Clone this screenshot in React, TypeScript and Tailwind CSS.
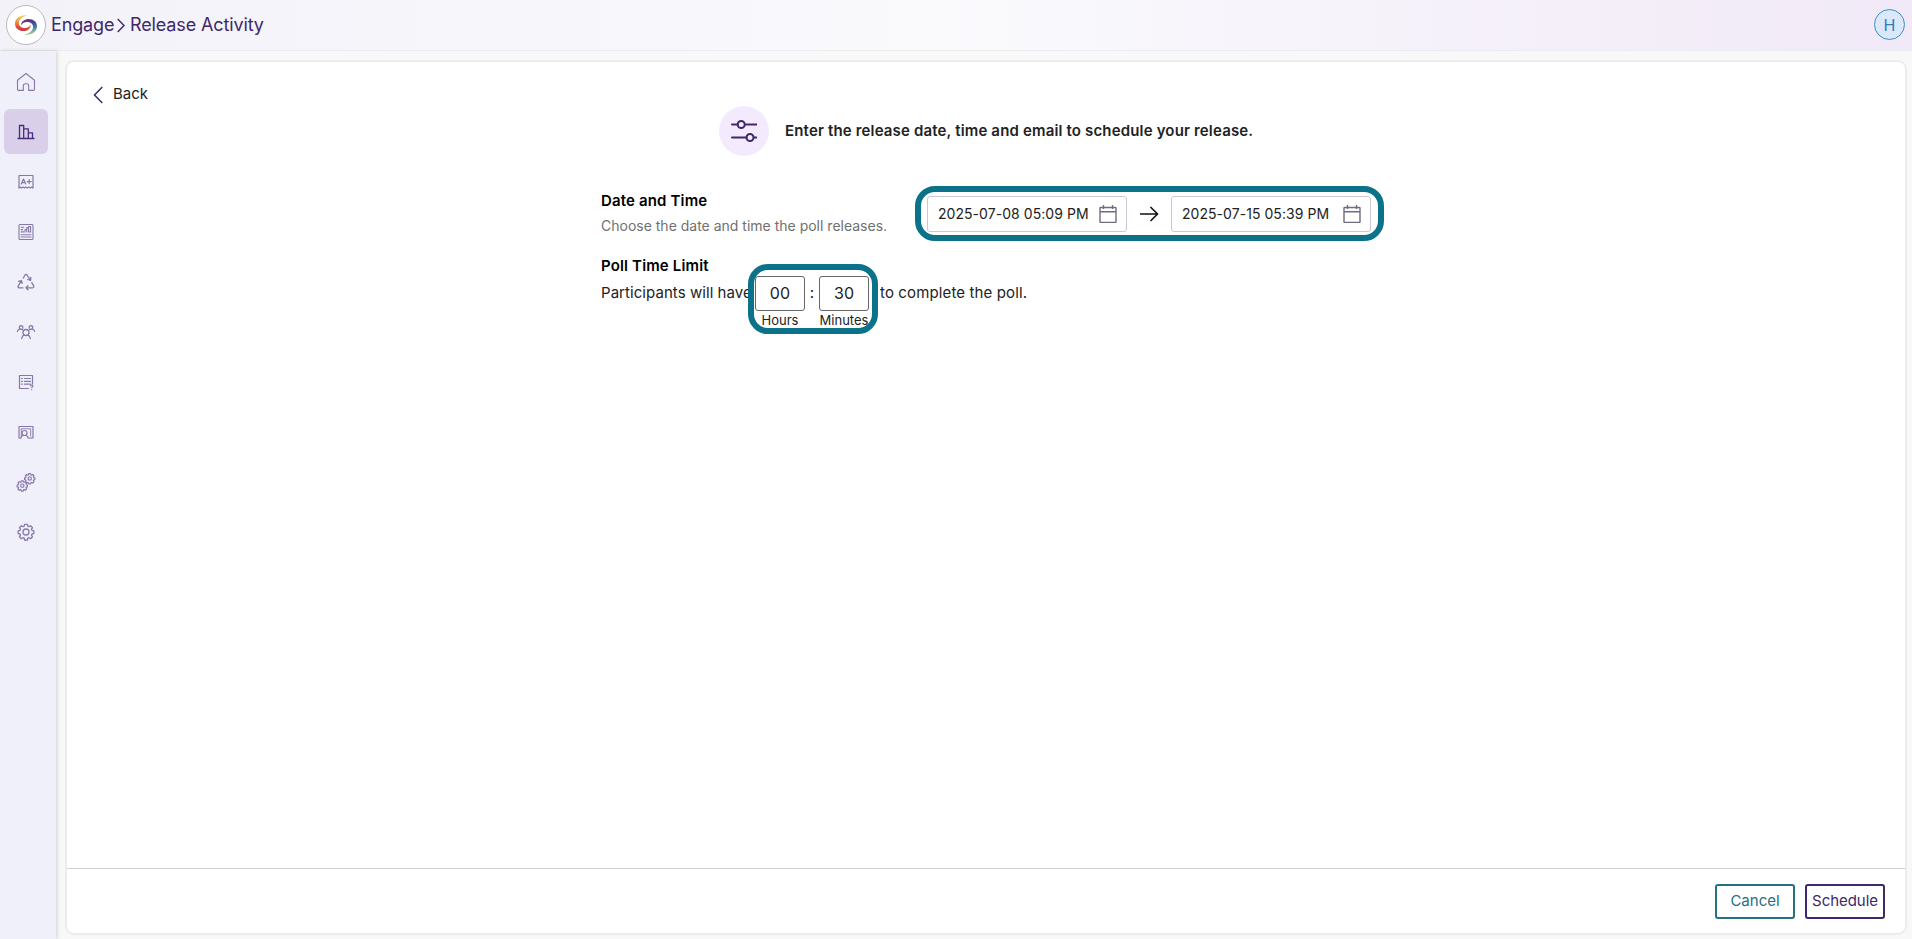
import React, { ReactNode } from "react";

type IconProps = {
  children: ReactNode;
  width?: number;
};

// Thin outlined 20x20 icon used by the sidebar
function NavIcon({ children, width = 1 }: IconProps) {
  return (
    <svg
      className="h-5 w-5"
      viewBox="0 0 20 20"
      fill="none"
      stroke="currentColor"
      strokeWidth={width}
      strokeLinejoin="round"
      strokeLinecap="round"
    >
      {children}
    </svg>
  );
}

const gear =
  "M8.6 3.200h2.800l.4 1.800 1.200.5 1.600-1 1.900 1.900-1 1.600.5 1.200 1.800.4v2.800l-1.800.4-.5 1.200 1 1.600-1.900 1.900-1.600-1-1.200.5-.4 1.800H8.600l-.4-1.800-1.200-.5-1.600 1-1.900-1.900 1-1.600-.5-1.200-1.800-.4V9.600L4 9.200 4.500 8l-1-1.600 1.900-1.900 1.600 1L8.200 5z";

const navItems = [
  {
    id: "home",
    icon: (
      <NavIcon width={1.1}>
        <path d="M1.500 8.300 10 1.500l8.500 6.800v9.200q0 .9-.9.900h-4.900v-4.600q0-2-2-2H9.300q-2 0-2 2v4.600H2.400q-.9 0-.9-.9z" />
      </NavIcon>
    ),
  },
  {
    id: "engage",
    icon: (
      <NavIcon width={1.3}>
        <path d="M2 16.500h16M3.500 16.500v-13h4.200v13M7.700 6.800h4.600v9.700M12.300 10.800h4.200v5.700" />
      </NavIcon>
    ),
  },
  {
    id: "grades",
    icon: (
      <NavIcon width={1.2}>
        <path d="M3 16V3.500h14V16M3 16l1.200-1 1.500 1 1.400-1 1.500 1 1.400-1 1.500 1 1.400-1 1.500 1 1.400-1L17 16" />
        <path d="M5.300 12 7.500 7l2.200 5M6 10.600h3M11.200 9.600h4M13.200 7.600v4" />
      </NavIcon>
    ),
  },
  {
    id: "reports",
    icon: (
      <NavIcon width={1.1}>
        <rect x="3" y="2.500" width="14" height="15" rx="1" />
        <path d="M5.200 5.300h2.500M5.200 7.600h1.500M5.200 9.900h2.500M9 10V7.500h1.800V10M10.800 10V5.600h1.800V10M12.600 10V4.500h2V10zM5 12.700h10M5 15h10" />
      </NavIcon>
    ),
  },
  {
    id: "recycle",
    icon: (
      <NavIcon width={1.3}>
        <path d="M7.300 6 9 3q1-1.400 2 0l3.500 5.300M14.800 5.300l-.2 3.100-2.900-.9" />
        <path d="M15.800 10.600l1.900 3.200q.6 1.900-1.200 2h-6.300M12 13.800l-2 2 2 2" />
        <path d="M7 15.800H3.300q-1.900-.3-1-2l2.900-5M2.500 9.300l2.800-.8.900 2.800" />
      </NavIcon>
    ),
  },
  {
    id: "groups",
    icon: (
      <NavIcon width={1.3}>
        <circle cx="10" cy="10.500" r="3" />
        <path d="M5.700 16.500q.5-2.700 2.300-3.300M14.300 16.500q-.5-2.700-2.300-3.300" />
        <path d="M1.400 9.300q.4-1.800 2.200-2.200Q2.700 3.800 5 3.700q2.200.1 1.800 2.400M6.500 7.700 4 7M18.600 9.300q-.4-1.800-2.200-2.200.9-3.300-1.400-3.400-2.200.1-1.800 2.400M13.500 7.700 16 7" />
      </NavIcon>
    ),
  },
  {
    id: "surveys",
    icon: (
      <NavIcon width={1.2}>
        <path d="M12.500 16.500H3.500v-13h13v8.500" />
        <path d="M5.500 6.500h1M8.500 6.500h6M5.500 9.300h1M8.500 9.300h6M5.500 12.100h1M8.500 12.100h6" />
        <path d="M14.500 14q.2-1 1.300-.9 1.500.3.900 1.500l-1 1M15.700 17.500v.2" />
      </NavIcon>
    ),
  },
  {
    id: "classes",
    icon: (
      <NavIcon width={1.2}>
        <path d="M4.500 16H3V4.500h14V16h-1.500" />
        <path d="M5.300 14V6.800h9.400V14" strokeWidth="0.9" />
        <circle cx="8.500" cy="11" r="2.500" />
        <path d="M4.800 16.200q.3-2.300 2.300-2.800M12.200 16.200q-.3-2.300-2.300-2.800M12.200 16h3" />
      </NavIcon>
    ),
  },
  {
    id: "integrations",
    icon: (
      <NavIcon>
        <g transform="translate(7.100 -.5) scale(.66)" strokeWidth="1.800">
          <path d={gear} />
          <circle cx="10" cy="10.500" r="2.500" />
        </g>
        <g transform="translate(-.3 6.700) scale(.66)" strokeWidth="1.800">
          <path d={gear} />
          <circle cx="10" cy="10.500" r="2.500" />
        </g>
      </NavIcon>
    ),
  },
  {
    id: "settings",
    icon: (
      <NavIcon width={1.3}>
        <path d={gear} transform="translate(0 -.8)" />
        <circle cx="10" cy="10" r="3" />
      </NavIcon>
    ),
  },
];

function Logo() {
  return (
    <div className="flex h-10 w-10 items-center justify-center rounded-full border border-[#b9b9bd] bg-white">
      <svg className="h-[22px] w-6" viewBox="0 0 24 22" fill="none">
        <defs>
          <linearGradient id="warm" x1="12" y1="1" x2="10" y2="18" gradientUnits="userSpaceOnUse">
            <stop offset="0" stopColor="#f8dc62" />
            <stop offset=".45" stopColor="#f0953d" />
            <stop offset=".8" stopColor="#d9453d" />
            <stop offset="1" stopColor="#b8324a" />
          </linearGradient>
          <linearGradient id="cool" x1="10" y1="4" x2="14" y2="21" gradientUnits="userSpaceOnUse">
            <stop offset="0" stopColor="#9c2c85" />
            <stop offset=".3" stopColor="#4c3a8e" />
            <stop offset=".6" stopColor="#3471b0" />
            <stop offset="1" stopColor="#a6d786" />
          </linearGradient>
        </defs>
        <path
          d="M13.500 1.500C6 .2 1 4.600 1 9.800c0 4.300 3.600 7.300 8.200 7.300 4.300 0 7.600-2.300 7.700-6.600-1.300 2.300-3.600 3.500-6.300 3.400-3.200-.1-5.800-2-5.700-5C5 5.300 8.500 2.300 13.500 1.500z"
          fill="url(#warm)"
        />
        <path
          d="M10.500 20.500c7.500 1.300 12.500-3.100 12.500-8.300 0-4.300-3.600-7.300-8.200-7.300-4.300 0-7.700 2.300-7.800 6.600 1.300-2.300 3.700-3.500 6.400-3.400 3.200.1 5.800 2 5.700 5-.1 3.600-3.600 6.600-8.600 7.400z"
          fill="url(#cool)"
        />
      </svg>
    </div>
  );
}

function Header() {
  return (
    <header className="flex h-[51px] shrink-0 items-start justify-between border-b border-[#ececf0] bg-linear-to-r from-[#f3f2f9] via-[#fafafd] to-[#f1e9f7] pl-1.5 pr-[7px]">
      <div className="flex pt-[5px] text-[18px] leading-10 text-[#40276c]">
        <Logo />
        <span className="ml-[5px] w-[63px] tracking-[-0.15px]">Engage</span>
        <svg className="ml-[3px] mt-[13px] h-[15px] w-2" viewBox="0 0 8 15" fill="none" stroke="currentColor" strokeWidth="1.400">
          <path d="M.7 1 7 7.500.7 14" />
        </svg>
        <span className="ml-[5px] tracking-[-0.12px]">Release Activity</span>
      </div>
      <div className="mt-[9px] flex h-[31px] w-[31px] items-center justify-center rounded-full border border-[#3f8fc4] bg-[#dae8fb] text-[16px] text-[#2f7fb5]">
        H
      </div>
    </header>
  );
}

function Sidebar() {
  return (
    <nav className="z-10 flex w-14 shrink-0 flex-col gap-[5px] bg-[#f0f0fa] pl-1 pt-2 shadow-[1px_0_4px_rgba(0,0,0,0.16)]">
      {navItems.map((item) => (
        <a
          key={item.id}
          className={`flex h-[45px] w-11 items-center justify-center rounded-md ${
            item.id === "engage" ? "bg-[#dacfe9] text-[#4a2c7c]" : "text-[#8878aa]"
          }`}
        >
          {item.icon}
        </a>
      ))}
    </nav>
  );
}

function DateField({ value }: { value: string }) {
  return (
    <div className="flex h-9 w-[200px] items-center justify-between rounded-[3px] border border-[#cbc8d6] pl-2.5 pr-[9px] text-[14px] text-[#222]">
      <span className="tracking-[0.05px]">{value}</span>
      <svg className="mt-px h-[18px] w-[18px]" viewBox="0 0 18 18" fill="none" stroke="#706b80" strokeWidth="1.400">
        <rect x="1" y="2.500" width="16" height="15" rx=".5" />
        <path d="M1 6.800h16M4.500 0v4M13.500 0v4" />
      </svg>
    </div>
  );
}

function TimeField({ value, label }: { value: string; label: string }) {
  return (
    <div className="flex w-[50px] flex-col items-center">
      <div className="flex h-[35px] w-full items-center justify-center rounded-[3px] border border-[#666] pb-px text-[16px] text-[#222]">
        {value}
      </div>
      <span className="text-[13px] leading-[18px] tracking-[0]">{label}</span>
    </div>
  );
}

export default function App() {
  return (
    <div className="flex h-[939px] w-[1912px] flex-col overflow-hidden bg-[#f8f8f8] font-['Inter',sans-serif] text-[#222]">
      <Header />
      <div className="flex min-h-0 flex-1">
        <Sidebar />
        <main className="mb-1 ml-[9px] mr-[5px] mt-[9px] flex flex-1 flex-col rounded-[9px] border-2 border-[#ececec] bg-white">
          {/* Back */}
          <div className="flex h-11 items-end pb-0.5 pl-[26px]">
            <svg className="h-[18px] w-2.5" viewBox="0 0 10 18" fill="none" stroke="#40276c" strokeWidth="1.500">
              <path d="M9.300 1 1.500 9l7.800 8" />
            </svg>
            <span className="ml-2.5 text-[15px] leading-5">Back</span>
          </div>

          {/* Title */}
          <div className="ml-[652px] flex h-[50px] items-center gap-4">
            <div className="flex h-[50px] w-[50px] items-center justify-center rounded-full bg-[#f4eafe]">
              <svg className="h-[26px] w-[26px]" viewBox="0 0 26 26" fill="none" stroke="#40276c" strokeWidth="2" strokeLinecap="round">
                <path d="M1 6.500h5.500M14 6.500h11.500M1 19.500h14.500M23 19.500h2.500" />
                <circle cx="10.200" cy="6.500" r="3.500" />
                <circle cx="19" cy="19.500" r="3.500" />
              </svg>
            </div>
            <h1 className="text-[15px] font-semibold tracking-[0.16px]">
              Enter the release date, time and email to schedule your release.
            </h1>
          </div>

          {/* Date range */}
          <div className="ml-[534px] mt-[30px] flex h-[55px]">
            <div className="w-[314px] pt-1">
              <h2 className="text-[15px] font-semibold leading-[22px] tracking-[0.15px] text-black">Date and Time</h2>
              <p className="mt-[3px] text-[14px] leading-[22px] text-[#707070]">
                Choose the date and time the poll releases.
              </p>
            </div>
            <div className="flex w-[469px] items-center rounded-[20px] border-6 border-[#0c7289] pl-1.5">
              <DateField value="2025-07-08 05:09 PM" />
              <svg className="ml-[13px] mr-3 h-4 w-[19px]" viewBox="0 0 19 16" fill="none" stroke="#111" strokeWidth="1.600">
                <path d="M0 8h17.500M10.500 1l7 7-7 7" />
              </svg>
              <DateField value="2025-07-15 05:39 PM" />
            </div>
          </div>

          {/* Time limit */}
          <div className="ml-[534px] mt-[14px]">
            <h2 className="text-[15px] font-semibold leading-[21px] tracking-[0.15px] text-black">Poll Time Limit</h2>
            <div className="relative flex text-[15px] leading-[34px] tracking-[0.13px]">
              <span className="w-[154px] whitespace-nowrap tracking-[0.06px]">Participants will have</span>
              <TimeField value="00" label="Hours" />
              <span className="w-3.5 text-center">:</span>
              <TimeField value="30" label="Minutes" />
              <span className="ml-[11px]">to complete the poll.</span>
              <div className="absolute -top-3 left-[147px] h-[70px] w-[130px] rounded-[20px] border-6 border-[#0c7289]" />
            </div>
          </div>

          {/* Footer */}
          <footer className="mt-auto flex h-[65px] shrink-0 justify-end gap-2.5 border-t border-[#cfcfcf] pr-5 pt-[15px] text-[15px]">
            <button className="h-[35px] w-20 rounded-[3px] border-2 border-[#247184] pb-px text-[#247184]">Cancel</button>
            <button className="h-[35px] w-20 rounded-[3px] border-2 border-[#40276c] pb-px tracking-[-0.05px] text-[#40276c]">Schedule</button>
          </footer>
        </main>
      </div>
    </div>
  );
}
